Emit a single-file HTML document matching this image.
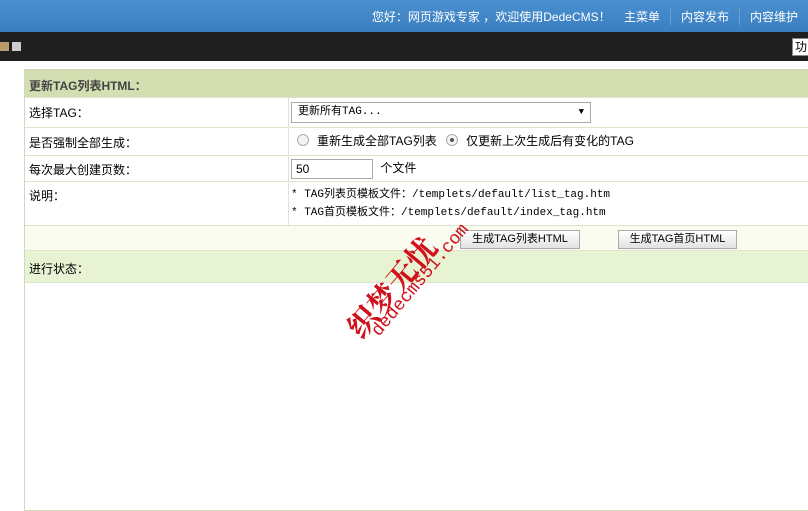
<!DOCTYPE html><html><head><meta charset="utf-8"><style>
body{margin:0;width:808px;height:502px;overflow:hidden;background:#fff;font-family:"Liberation Sans","Noto Sans CJK SC",sans-serif;font-size:12px;color:#000;position:relative}
.top{position:absolute;left:0;top:0;width:808px;height:32px;background:linear-gradient(#4a8fcf,#3a7fc0)}
.top .t{position:absolute;top:8px;right:0;color:#fff;font-size:12px;white-space:nowrap}
.top .t span{display:inline-block;padding:0 10px;border-left:1px solid #6a9fd0}
.dark{position:absolute;left:0;top:32px;width:808px;height:29px;background:#1f1f20}
.sq{position:absolute;top:10px;width:9px;height:9px}
.box{position:absolute;left:24px;top:69px;width:790px;height:440px;border:1px solid #cfd9bc;border-right:none}
.row{position:absolute;left:0;width:790px;border-bottom:1px solid #dde5cc}
.l{position:absolute;left:4px}
.r{position:absolute;left:263px;top:0;bottom:0;border-left:1px solid #dde5cc;padding-left:2px}
.mono{font-family:"Liberation Mono","Noto Sans CJK SC",monospace;font-size:11px}
.btn{position:absolute;top:4px;height:17px;border:1px solid #aaa;background:linear-gradient(#fff,#e2e2e2);font-size:11px;text-align:center;line-height:17px}
.rad{display:inline-block;width:10px;height:10px;border:1px solid #aaa;border-radius:50%;vertical-align:-1px;margin:0 8px 0 6px;background:#f3f3f3;position:relative}
</style></head><body>
<div class="top"><div class="t">您好：网页游戏专家 ，欢迎使用DedeCMS！ <span style="border:none">主菜单</span><span>内容发布</span><span>内容维护</span></div></div>
<div class="dark"><div class="sq" style="left:0;background:#b89c6a"></div><div class="sq" style="left:12px;background:#ccc"></div>
<div style="position:absolute;left:792px;top:6px;width:20px;height:16px;background:#fff;border:1px solid #888;font-size:12px;line-height:16px;padding-left:2px">功</div></div>
<div class="box">
<div class="row" style="top:0;height:27px;background:#d3dfb0"><b class="l" style="top:7px;color:#444;font-size:12px">更新TAG列表HTML：</b></div>
<div class="row" style="top:28px;height:29px"><span class="l" style="top:6px">选择TAG：</span><div class="r"><div style="margin-top:4px;box-sizing:border-box;width:300px;height:21px;border:1px solid #aaa;line-height:19px;padding-left:6px" class="mono">更新所有TAG...<span style="float:right;margin-right:6px;font-size:9px">▼</span></div></div></div>
<div class="row" style="top:58px;height:27px"><span class="l" style="top:6px">是否强制全部生成：</span><div class="r" style="line-height:27px"><span class="rad"></span>重新生成全部TAG列表 <span class="rad"><span style="position:absolute;left:3px;top:3px;width:4px;height:4px;border-radius:50%;background:#555"></span></span>仅更新上次生成后有变化的TAG</div></div>
<div class="row" style="top:86px;height:25px"><span class="l" style="top:5px">每次最大创建页数：</span><div class="r"><div style="display:inline-block;margin-top:3px;width:76px;height:18px;border:1px solid #aaa;line-height:18px;padding-left:4px;vertical-align:top">50</div> <span style="line-height:25px;margin-left:4px">个文件</span></div></div>
<div class="row" style="top:112px;height:43px"><span class="l" style="top:5px">说明：</span><div class="r mono" style="padding-top:4px;line-height:18px">* TAG列表页模板文件：/templets/default/list_tag.htm<br>* TAG首页模板文件：/templets/default/index_tag.htm</div></div>
<div class="row" style="top:156px;height:24px;background:#f9fcee"><div class="btn" style="left:435px;width:118px">生成TAG列表HTML</div><div class="btn" style="left:593px;width:117px">生成TAG首页HTML</div></div>
<div class="row" style="top:181px;height:31px;background:#e8f3d4"><span class="l" style="top:9px">进行状态：</span></div>
</div>
<div style="position:absolute;transform:rotate(-50deg);transform-origin:left top;color:#d0101a;font-size:30px;font-weight:bold;font-family:'Noto Serif CJK SC',serif;white-space:nowrap;top:318px;left:335px">织梦无忧</div>
<div style="position:absolute;left:368px;top:328px;transform:rotate(-50deg);transform-origin:left top;color:#d0101a;font-size:18px;font-family:'Liberation Mono',monospace;white-space:nowrap">dedecms51.com</div>
</body></html>
